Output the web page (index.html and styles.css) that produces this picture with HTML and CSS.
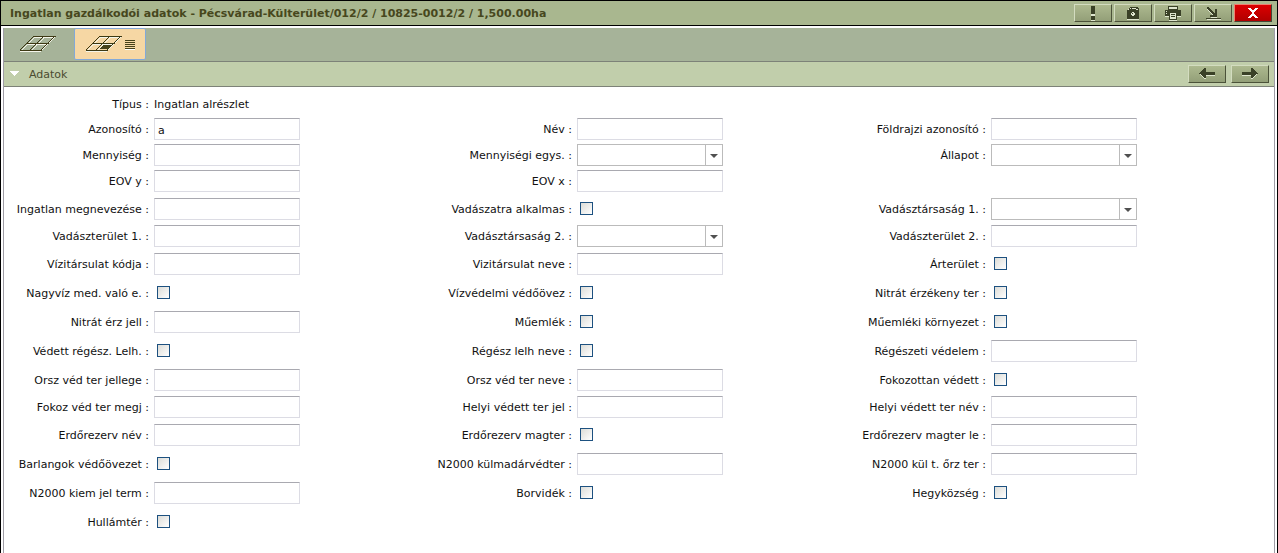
FILE: index.html
```html
<!DOCTYPE html>
<html lang="hu">
<head>
<meta charset="utf-8">
<title>Ingatlan gazdálkodói adatok</title>
<link rel="stylesheet" href="styles.css">
</head>
<body>
<div class="window">
  <header class="titlebar">
    <h1 class="title">Ingatlan gazdálkodói adatok - Pécsvárad-Külterület/012/2 / 10825-0012/2 / 1,500.00ha</h1>
    <div class="title-actions">
      <button class="btn" type="button" aria-label="Figyelmeztetés"><svg class="icon" width="18" height="16" viewBox="0 0 18 16"><path class="lite" d="M7 9h4v2H7zM7 15h4v1H7z"/><path class="ink" d="M7 1h4v8H7zM7 11h4v4H7z"/></svg></button>
      <button class="btn" type="button" aria-label="Mentés"><svg class="icon" width="18" height="16" viewBox="0 0 18 16"><path class="lite" d="M3 14h12v1H3z"/><path class="ink" d="M6 2h8v1h1v11H3V5h1V4h1V3h1z"/><path class="lite" d="M6 3h1v1H5v1H4V4h2zM8 3h4v1H8zM12 4h2v1h-2zM8 7h2v1h1v2h-1v1H8v-1H7V8h1z"/><path class="ink" d="M8 8h1v1H8z"/></svg></button>
      <button class="btn" type="button" aria-label="Nyomtatás"><svg class="icon" width="18" height="16" viewBox="0 0 18 16"><path class="lite" d="M1 11h4v1H1zM13 11h4v1h-4zM5 15h8v1H5z"/><path class="ink" d="M4 1h10v4h3v6h-4v4H5v-4H1V5h3z"/><path class="lite" d="M5 2h8v2H5zM2 6h1v1H2zM2 8h1v1H2zM6 8h6v6H6z"/><path class="ink" d="M7 9h4v1H7zM7 11h4v1H7z"/></svg></button>
      <button class="btn" type="button" aria-label="Kis méret"><svg class="icon" width="18" height="16" viewBox="0 0 18 16"><path class="lite" d="M3 4h2v1h1v1h1v1h1v1h1v1h1v1h1v1H9v-1H8V9H7V8H6V7H5V6H4V5H3zM7 12h6v1H7zM3 14h14v1H3z"/><path class="ink" d="M3 2h2v1h1v1h1v1h1v1h1v1h1v1h1V4h2v8H6v-2h3V9H8V8H7V7H6V6H5V5H4V4H3zM2 13h15v1H2z"/></svg></button>
      <button class="btn close" type="button" aria-label="Bezárás"><svg class="icon" width="18" height="16" viewBox="0 0 18 16"><path fill="#fff" d="M4 3h3v1h1v1h2V4h1V3h3v1h-1v1h-1v1h-1v1h-1v2h1v1h1v1h1v1h1v1h-3v-1h-1v-1H8v1H7v1H4v-1h1v-1h1v-1h1V9h1V7H7V6H6V5H5V4H4z"/></svg></button>
    </div>
  </header>
  <main class="panel">
    <nav class="toolbar">
      <button class="tab" type="button" aria-label="Térkép"><svg class="icon" width="40" height="18" viewBox="0 0 40 18"><g class="grid-lite"><path d="M15 2.5h21M8 9.5h21M1 16.5h21M16 2L2 16M26 2L12 16M36 2L22 16"/></g><g class="grid-ink"><path d="M15 1.5h22M8 8.5h22M1 15.5h22M15 1L1 15M25 1L11 15M36 1L22 15"/></g></svg></button>
      <button class="tab active" type="button" aria-label="Térkép és lista"><svg class="icon" width="50" height="18" viewBox="0 0 50 18"><g class="grid-lite"><path d="M15 2.5h21M8 9.5h21M1 16.5h21M16 2L2 16M26 2L12 16M36 2L22 16"/></g><g class="grid-ink"><path d="M15 1.5h22M8 8.5h22M1 15.5h22M15 1L1 15M25 1L11 15M36 1L22 15"/></g><path class="brown" d="M18 10h9l-4 4h-9zM40 5h10v1H40zM40 7h10v1H40zM40 9h10v1H40zM40 11h10v1H40zM40 13h10v1H40z"/><path fill="#fff" d="M40 14h10v1H40z"/></svg></button>
    </nav>
    <div class="section-head">
      <svg class="icon" width="10" height="6" viewBox="0 0 10 6"><path fill="#fff" d="M0 0h9v1H8v1H7v1H6v1H5v1H4V4H3V3H2V2H1V1H0z"/></svg>
      <h2 class="section-title">Adatok</h2>
      <div class="section-actions">
        <button class="btn" type="button" aria-label="Előző"><svg class="icon" width="18" height="14" viewBox="0 0 18 14"><path class="lite" d="M2 7h1v1h1v1h1v1h1v1h2v1H6v-1H5v-1H4V9H3V8H2zM8 8h9v1H8z"/><path class="ink" d="M1 6h1V5h1V4h1V3h1V2h1V1h2v4h9v3H8v3H6v-1H5V9H4V8H3V7H1z"/></svg></button>
        <button class="btn" type="button" aria-label="Következő"><svg class="icon" width="18" height="14" viewBox="0 0 18 14"><path class="lite" d="M1 8h9v1H1zM10 11h2v-1h1V9h1V8h1V7h1v1h-1v1h-1v1h-1v1h-1v1h-2z"/><path class="ink" d="M17 6h-1V5h-1V4h-1V3h-1V2h-1V1h-2v4H1v3h9v3h2v-1h1V9h1V8h1V7h2z"/></svg></button>
      </div>
    </div>
    <form class="form">
      <div class="row info">
        <div class="cell"><span class="label">Típus :</span><span class="value">Ingatlan alrészlet</span></div>
      </div>
      <div class="row">
        <div class="cell"><label class="label" for="f1">Azonosító :</label><input class="text" id="f1" type="text" value="a"></div>
        <div class="cell"><label class="label" for="f2">Név :</label><input class="text" id="f2" type="text"></div>
        <div class="cell"><label class="label" for="f3">Földrajzi azonosító :</label><input class="text" id="f3" type="text"></div>
      </div>
      <div class="row">
        <div class="cell"><label class="label" for="f4">Mennyiség :</label><input class="text" id="f4" type="text"></div>
        <div class="cell"><label class="label" for="f5">Mennyiségi egys. :</label><span class="combo"><select class="select" id="f5"><option></option></select></span></div>
        <div class="cell"><label class="label" for="f6">Állapot :</label><span class="combo"><select class="select" id="f6"><option></option></select></span></div>
      </div>
      <div class="row">
        <div class="cell"><label class="label" for="f7">EOV y :</label><input class="text" id="f7" type="text"></div>
        <div class="cell"><label class="label" for="f8">EOV x :</label><input class="text" id="f8" type="text"></div>
      </div>
      <div class="row tall">
        <div class="cell"><label class="label" for="f9">Ingatlan megnevezése :</label><input class="text" id="f9" type="text"></div>
        <div class="cell"><label class="label" for="f10">Vadászatra alkalmas :</label><input class="check" id="f10" type="checkbox"></div>
        <div class="cell"><label class="label" for="f11">Vadásztársaság 1. :</label><span class="combo"><select class="select" id="f11"><option></option></select></span></div>
      </div>
      <div class="row">
        <div class="cell"><label class="label" for="f12">Vadászterület 1. :</label><input class="text" id="f12" type="text"></div>
        <div class="cell"><label class="label" for="f13">Vadásztársaság 2. :</label><span class="combo"><select class="select" id="f13"><option></option></select></span></div>
        <div class="cell"><label class="label" for="f14">Vadászterület 2. :</label><input class="text" id="f14" type="text"></div>
      </div>
      <div class="row tall">
        <div class="cell"><label class="label" for="f15">Vízitársulat kódja :</label><input class="text" id="f15" type="text"></div>
        <div class="cell"><label class="label" for="f16">Vizitársulat neve :</label><input class="text" id="f16" type="text"></div>
        <div class="cell"><label class="label" for="f17">Árterület :</label><input class="check" id="f17" type="checkbox"></div>
      </div>
      <div class="row tall">
        <div class="cell"><label class="label" for="f18">Nagyvíz med. való e. :</label><input class="check" id="f18" type="checkbox"></div>
        <div class="cell"><label class="label" for="f19">Vízvédelmi védőövez :</label><input class="check" id="f19" type="checkbox"></div>
        <div class="cell"><label class="label" for="f20">Nitrát érzékeny ter :</label><input class="check" id="f20" type="checkbox"></div>
      </div>
      <div class="row tall">
        <div class="cell"><label class="label" for="f21">Nitrát érz jell :</label><input class="text" id="f21" type="text"></div>
        <div class="cell"><label class="label" for="f22">Műemlék :</label><input class="check" id="f22" type="checkbox"></div>
        <div class="cell"><label class="label" for="f23">Műemléki környezet :</label><input class="check" id="f23" type="checkbox"></div>
      </div>
      <div class="row tall">
        <div class="cell"><label class="label" for="f24">Védett régész. Lelh. :</label><input class="check" id="f24" type="checkbox"></div>
        <div class="cell"><label class="label" for="f25">Régész lelh neve :</label><input class="check" id="f25" type="checkbox"></div>
        <div class="cell"><label class="label" for="f26">Régészeti védelem :</label><input class="text" id="f26" type="text"></div>
      </div>
      <div class="row tall">
        <div class="cell"><label class="label" for="f27">Orsz véd ter jellege :</label><input class="text" id="f27" type="text"></div>
        <div class="cell"><label class="label" for="f28">Orsz véd ter neve :</label><input class="text" id="f28" type="text"></div>
        <div class="cell"><label class="label" for="f29">Fokozottan védett :</label><input class="check" id="f29" type="checkbox"></div>
      </div>
      <div class="row">
        <div class="cell"><label class="label" for="f30">Fokoz véd ter megj :</label><input class="text" id="f30" type="text"></div>
        <div class="cell"><label class="label" for="f31">Helyi védett ter jel :</label><input class="text" id="f31" type="text"></div>
        <div class="cell"><label class="label" for="f32">Helyi védett ter név :</label><input class="text" id="f32" type="text"></div>
      </div>
      <div class="row tall">
        <div class="cell"><label class="label" for="f33">Erdőrezerv név :</label><input class="text" id="f33" type="text"></div>
        <div class="cell"><label class="label" for="f34">Erdőrezerv magter :</label><input class="check" id="f34" type="checkbox"></div>
        <div class="cell"><label class="label" for="f35">Erdőrezerv magter le :</label><input class="text" id="f35" type="text"></div>
      </div>
      <div class="row tall">
        <div class="cell"><label class="label" for="f36">Barlangok védőövezet :</label><input class="check" id="f36" type="checkbox"></div>
        <div class="cell"><label class="label" for="f37">N2000 külmadárvédter :</label><input class="text" id="f37" type="text"></div>
        <div class="cell"><label class="label" for="f38">N2000 kül t. őrz ter :</label><input class="text" id="f38" type="text"></div>
      </div>
      <div class="row tall">
        <div class="cell"><label class="label" for="f39">N2000 kiem jel term :</label><input class="text" id="f39" type="text"></div>
        <div class="cell"><label class="label" for="f40">Borvidék :</label><input class="check" id="f40" type="checkbox"></div>
        <div class="cell"><label class="label" for="f41">Hegyközség :</label><input class="check" id="f41" type="checkbox"></div>
      </div>
      <div class="row tall">
        <div class="cell"><label class="label" for="f42">Hullámtér :</label><input class="check" id="f42" type="checkbox"></div>
      </div>
    </form>
  </main>
</div>
</body>
</html>
```

FILE: styles.css
```css
* {
  box-sizing: border-box;
}

body {
  margin: 0;
  background: #fff;
  color: #111;
  font: 11px/14px "DejaVu Sans", Verdana, sans-serif;
}

.window {
  display: flex;
  flex-direction: column;
  min-height: 100vh;
  border: 1px solid #000;
  border-bottom: 0;
}

.titlebar {
  display: flex;
  align-items: center;
  justify-content: space-between;
  height: 25px;
  padding: 0 5px 0 9px;
  border-bottom: 1px solid #000;
  background: #a9b78f;
}

.title {
  margin: 0;
  padding-top: 2px;
  color: #47471d;
  font-size: 11px;
  font-weight: bold;
  white-space: nowrap;
}

.title-actions {
  display: flex;
  gap: 2px;
}

.btn {
  display: flex;
  align-items: center;
  justify-content: center;
  width: 38px;
  height: 18px;
  padding: 0;
  border: 1px solid #d3dcc0;
  border-right-color: #4b5239;
  border-bottom-color: #4b5239;
  background: linear-gradient(#adb98f, #939f78);
}

.close {
  border-color: #f08070;
  border-right-color: #404a36;
  border-bottom-color: #404a36;
  background: linear-gradient(#dc0000, #b00000);
}

.icon {
  display: block;
  flex: none;
  shape-rendering: crispEdges;
}

.ink {
  fill: #3a4127;
}

.brown {
  fill: #47421a;
}

.lite {
  fill: #dfe6cf;
}

.grid-lite {
  fill: none;
  stroke: #f4f5ea;
}

.grid-ink {
  fill: none;
  stroke: #3d3914;
}

.panel {
  flex: 1;
  margin: 2px 2px 0;
  border: solid #9f9da6;
  border-width: 0 1px;
}

.toolbar {
  display: flex;
  height: 34px;
  border-bottom: 1px solid #7d8278;
  background: #a6b399;
}

.tab {
  display: flex;
  align-items: center;
  justify-content: center;
  width: 70px;
  height: 32px;
  padding: 0;
  border: 0;
  background: transparent;
}

.active {
  width: 72px;
  border: 1px solid #83a9d8;
  border-radius: 2px;
  background: #f6d7a4;
}

.section-head {
  display: flex;
  align-items: center;
  height: 25px;
  padding: 0 5px 0 6px;
  border-bottom: 1px solid #7d8278;
  background: #c1ceab;
}

.section-title {
  flex: 1;
  margin: 0 0 0 9px;
  padding-top: 2px;
  color: #4b4b30;
  font-size: 11px;
  font-weight: normal;
}

.section-actions {
  display: flex;
  gap: 5px;
}

.form {
  padding: 5px 0;
}

.row {
  display: grid;
  grid-template-columns: 423fr 414fr 433fr;
  align-items: center;
  height: 26px;
}

.info {
  height: 24px;
}

.tall {
  height: 29px;
}

.cell {
  display: flex;
  align-items: center;
  gap: 5px;
}

.label {
  width: 145px;
  padding-top: 2px;
  text-align: right;
  white-space: nowrap;
}

.value {
  padding-top: 2px;
}

.text,
.select {
  width: 146px;
  height: 22px;
  margin: 0;
  border: 1px solid #dcdce4;
  border-top-color: #a9a9b0;
  border-radius: 0;
  padding: 2px 3px 0;
  background: #fff;
  color: #111;
  font: inherit;
}

.combo {
  position: relative;
  display: flex;
}

.select {
  appearance: none;
  border-color: #bbb;
  padding-right: 20px;
}

.combo::before {
  content: "";
  position: absolute;
  top: 1px;
  bottom: 1px;
  right: 17px;
  width: 1px;
  background: #bbb;
  pointer-events: none;
}

.combo::after {
  content: "";
  position: absolute;
  top: 10px;
  right: 5px;
  border: 4px solid transparent;
  border-top-color: #505050;
  border-bottom: 0;
  pointer-events: none;
}

.check {
  appearance: none;
  width: 13px;
  height: 13px;
  margin: 0 0 0 3px;
  border: 1px solid #1d5180;
  background: linear-gradient(135deg, #dcdcd7, #fff);
}

.check:checked {
  background: #1d5180;
}
```
